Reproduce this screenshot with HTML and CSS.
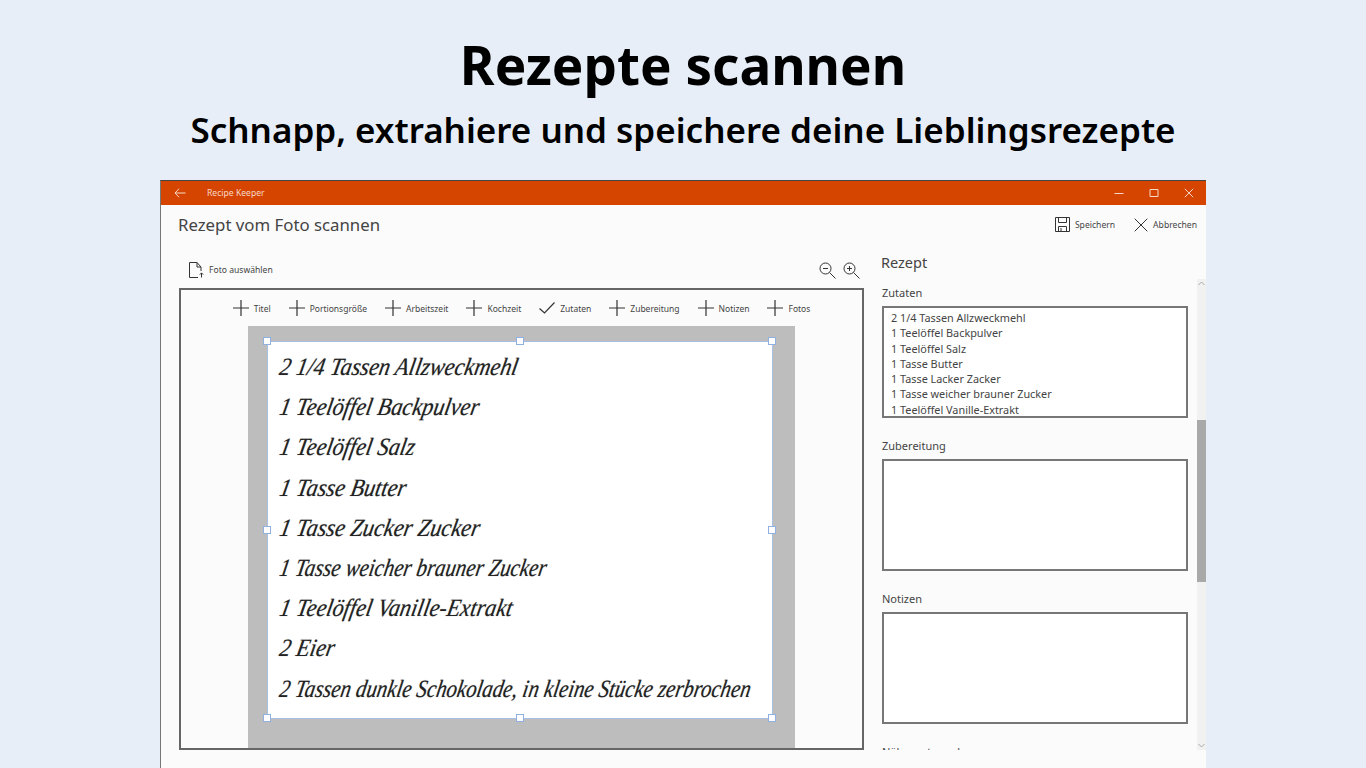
FILE: index.html
```html
<!DOCTYPE html>
<html lang="de">
<head>
  <meta charset="UTF-8">
  <title>Rezepte scannen</title>
  <link rel="stylesheet" href="styles.css">
</head>
<body>

<header class="hero">
  <h1>Rezepte scannen</h1>
  <h2>Schnapp, extrahiere und speichere deine Lieblingsrezepte</h2>
</header>

<div class="window">
  <div class="titlebar">
    <svg class="back" width="12" height="10" viewBox="0 0 12 10"><path d="M5 0.8 1 5l4 4.2M1 5h10.5"/></svg>
    <span class="app-name">Recipe Keeper</span>
    <div class="win-controls">
      <svg width="10" height="10" viewBox="0 0 10 10"><path d="M0.5 5.5h9"/></svg>
      <svg width="10" height="10" viewBox="0 0 10 10"><path d="M1 1.5h8v7H1z"/></svg>
      <svg width="10" height="10" viewBox="0 0 10 10"><path d="M0.8 0.8l8.4 8.4M9.2 0.8 0.8 9.2"/></svg>
    </div>
  </div>

  <div class="page-head">
    <div class="page-title">Rezept vom Foto scannen</div>
    <div class="page-actions">
      <span class="action">
        <svg width="15" height="15" viewBox="0 0 15 15"><path d="M0.5 0.5h14v14H0.5zM3.5 0.5v5h8v-5M3.5 14.5v-5h8v5M6 11v3.5"/></svg>
        Speichern
      </span>
      <span class="action">
        <svg width="14" height="14" viewBox="0 0 14 14"><path d="M0.7 0.7l12.6 12.6M13.3 0.7 0.7 13.3"/></svg>
        Abbrechen
      </span>
    </div>
  </div>

  <div class="content">
    <section class="left">
      <div class="photo-bar">
        <span class="action">
          <svg width="15" height="16" viewBox="0 0 15 16"><path d="M12 9V5L8 0.5H0.5v15H9M8 0.5V5h4M12.5 15.5V11M10.8 12.6l1.7-1.7 1.7 1.7"/></svg>
          Foto auswählen
        </span>
        <div class="zoom-btns">
          <svg width="17" height="17" viewBox="0 0 17 17"><circle cx="6.5" cy="6.5" r="5.5"/><path d="M10.5 10.5l6 6M4 6.5h5"/></svg>
          <svg width="17" height="17" viewBox="0 0 17 17"><circle cx="6.5" cy="6.5" r="5.5"/><path d="M10.5 10.5l6 6M4 6.5h5M6.5 4v5"/></svg>
        </div>
      </div>

      <div class="canvas">
        <div class="field-bar">
          <span class="field"><svg class="plus" viewBox="0 0 16 16"><path d="M8 0v16M0 8h16"/></svg>Titel</span>
          <span class="field"><svg class="plus" viewBox="0 0 16 16"><path d="M8 0v16M0 8h16"/></svg>Portionsgröße</span>
          <span class="field"><svg class="plus" viewBox="0 0 16 16"><path d="M8 0v16M0 8h16"/></svg>Arbeitszeit</span>
          <span class="field"><svg class="plus" viewBox="0 0 16 16"><path d="M8 0v16M0 8h16"/></svg>Kochzeit</span>
          <span class="field"><svg class="plus" viewBox="0 0 16 16"><path d="M0.5 8.5 5.5 13 15.5 2.5"/></svg>Zutaten</span>
          <span class="field"><svg class="plus" viewBox="0 0 16 16"><path d="M8 0v16M0 8h16"/></svg>Zubereitung</span>
          <span class="field"><svg class="plus" viewBox="0 0 16 16"><path d="M8 0v16M0 8h16"/></svg>Notizen</span>
          <span class="field"><svg class="plus" viewBox="0 0 16 16"><path d="M8 0v16M0 8h16"/></svg>Fotos</span>
        </div>

        <div class="stage">
          <div class="crop">
            <p class="hand">2 1/4 Tassen Allzweckmehl</p>
            <p class="hand">1 Teelöffel Backpulver</p>
            <p class="hand">1 Teelöffel Salz</p>
            <p class="hand">1 Tasse Butter</p>
            <p class="hand">1 Tasse Zucker Zucker</p>
            <p class="hand long">1 Tasse weicher brauner Zucker</p>
            <p class="hand">1 Teelöffel Vanille-Extrakt</p>
            <p class="hand">2 Eier</p>
            <p class="hand long">2 Tassen dunkle Schokolade, in kleine Stücke zerbrochen</p>
            <i class="handle tl"></i><i class="handle tc"></i><i class="handle tr"></i>
            <i class="handle ml"></i><i class="handle mr"></i>
            <i class="handle bl"></i><i class="handle bc"></i><i class="handle br"></i>
          </div>
        </div>
      </div>
    </section>

    <section class="right">
      <div class="right-title">Rezept</div>
      <div class="scroller">
        <div class="form">
          <label>Zutaten</label>
          <div class="textbox"><div class="lines">2 1/4 Tassen Allzweckmehl<br>1 Teelöffel Backpulver<br>1 Teelöffel Salz<br>1 Tasse Butter<br>1 Tasse Lacker Zacker<br>1 Tasse weicher brauner Zucker<br>1 Teelöffel Vanille-Extrakt</div></div>
          <label>Zubereitung</label>
          <div class="textbox"></div>
          <label>Notizen</label>
          <div class="textbox"></div>
          <label>Nährwertangaben</label>
        </div>
        <div class="scrollbar">
          <svg class="arrow" width="7" height="5" viewBox="0 0 7 5"><path d="M0.5 4 3.5 1l3 3"/></svg>
          <div class="thumb"></div>
          <svg class="arrow" width="7" height="5" viewBox="0 0 7 5"><path d="M0.5 1 3.5 4l3-3"/></svg>
        </div>
      </div>
    </section>
  </div>
</div>

</body>
</html>
```

FILE: styles.css
```css
html, body {
  height: 768px;
  overflow: hidden;
}
body {
  margin: 0;
  background-color: #e7eef7;
  font-family: "Noto Sans", "Open Sans", sans-serif;
  color: #444;
  display: flex;
  flex-direction: column;
}
svg {
  fill: none;
  stroke: #333;
  stroke-width: 1;
  flex: none;
}

/* heading above the screenshot */
.hero {
  height: 180px;
  text-align: center;
  color: #000;
  flex: none;
}
.hero h1 {
  margin: 0;
  padding-top: 27px;
  font-size: 53px;
  line-height: 76px;
  font-weight: 700;
}
.hero h2 {
  margin: 0;
  padding-top: 4px;
  font-size: 35px;
  line-height: 46px;
  font-weight: 600;
}

/* app window */
.window {
  width: 1046px;
  margin-left: 160px;
  flex: 1;
  min-height: 0;
  background: #fbfbfb;
  border-top: 1px solid #444;
  border-left: 1px solid #777;
  box-sizing: border-box;
  display: flex;
  flex-direction: column;
}
.titlebar {
  height: 24px;
  background: #d64500;
  display: flex;
  align-items: center;
  padding-left: 13px;
  flex: none;
}
.titlebar svg {
  stroke: #f6d8c8;
}
.app-name {
  margin-left: 21px;
  font-size: 8.6px;
  color: #f6d8c8;
}
.win-controls {
  margin-left: auto;
  margin-right: 12px;
  display: flex;
  gap: 25px;
}

.page-head {
  height: 41px;
  display: flex;
  align-items: center;
  justify-content: space-between;
  padding: 0 9px 2px 17px;
  box-sizing: border-box;
  flex: none;
}
.page-title {
  font-size: 16.8px;
  color: #444;
}
.page-actions {
  display: flex;
  gap: 19px;
}
.action {
  display: flex;
  align-items: center;
  gap: 5px;
  font-size: 8.6px;
  color: #444;
}

.content {
  display: flex;
  flex: 1;
  min-height: 0;
}
.left {
  width: 703px;
  padding: 15px 0 18px 18px;
  box-sizing: border-box;
  display: flex;
  flex-direction: column;
}
.photo-bar {
  height: 27px;
  display: flex;
  align-items: center;
  justify-content: space-between;
  padding: 0 4px 9px 10px;
  box-sizing: border-box;
  flex: none;
}
.zoom-btns {
  display: flex;
  gap: 7px;
}

.canvas {
  width: 685px;
  flex: 1;
  box-sizing: border-box;
  border: 2px solid #666;
  display: flex;
  flex-direction: column;
  align-items: center;
  min-height: 0;
}
.field-bar {
  height: 36px;
  display: flex;
  align-items: center;
  gap: 18px;
  flex: none;
}
.field {
  display: flex;
  align-items: center;
  gap: 5px;
  font-size: 8.5px;
  color: #444;
}
.plus {
  width: 16px;
  height: 16px;
  stroke-width: 1.2;
}

/* scanned photo */
.stage {
  width: 547px;
  flex: 1;
  min-height: 0;
  background: #bdbdbd;
  box-sizing: border-box;
  padding: 15px 22px 29px 19px;
}
.crop {
  position: relative;
  height: 100%;
  box-sizing: border-box;
  background: #fff;
  border: 1px solid #a9c0e4;
  padding: 5px 0 0 12px;
}
.hand {
  margin: 0;
  height: 40.2px;
  line-height: 40px;
  font-family: "Liberation Serif", serif;
  font-style: italic;
  font-size: 25px;
  color: #222;
  white-space: nowrap;
  transform-origin: left center;
  transform: scaleX(0.89) skewX(-12deg);
  text-shadow: 0 0 1px rgba(0, 0, 0, 0.4);
}
.hand.long {
  transform: scaleX(0.83) skewX(-12deg);
}
.handle {
  position: absolute;
  width: 8px;
  height: 8px;
  box-sizing: border-box;
  background: #fff;
  border: 1px solid #8fb0e0;
}
.tl { left: -5px; top: -5px; }
.tc { left: 248px; top: -5px; }
.tr { right: -4px; top: -5px; }
.ml { left: -5px; top: 184px; }
.mr { right: -4px; top: 184px; }
.bl { left: -5px; bottom: -4px; }
.bc { left: 248px; bottom: -4px; }
.br { right: -4px; bottom: -4px; }

/* recipe form on the right */
.right {
  flex: 1;
  min-width: 0;
  display: flex;
  flex-direction: column;
  padding-bottom: 18px;
}
.right-title {
  margin-left: 17px;
  height: 33px;
  line-height: 33px;
  font-size: 14.5px;
  color: #444;
  flex: none;
}
.scroller {
  flex: 1;
  min-height: 0;
  display: flex;
  overflow: hidden;
}
.form {
  flex: 1;
  padding-left: 18px;
  overflow: hidden;
}
.form label {
  display: block;
  height: 27px;
  line-height: 28px;
  font-size: 11px;
  color: #444;
}
.textbox {
  width: 306px;
  height: 112px;
  box-sizing: border-box;
  margin-bottom: 14px;
  border: 2px solid #777;
  background: #fff;
  padding: 2px 7px;
  font-size: 10.85px;
  line-height: 15.3px;
  color: #444;
  white-space: nowrap;
}
.lines {
  height: 104px;
  overflow: hidden;
}
.scrollbar {
  width: 9px;
  background: #f1f1f1;
  display: flex;
  flex-direction: column;
  align-items: center;
  flex: none;
}
.arrow {
  stroke: #aaa;
  margin: 2px 0;
}
.thumb {
  width: 100%;
  height: 162px;
  background: #a9a9a9;
  margin-top: 132px;
  margin-bottom: auto;
}
```
